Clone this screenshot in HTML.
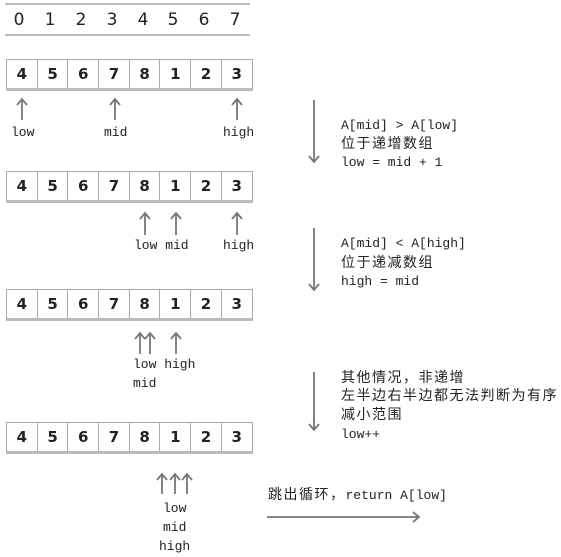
<!DOCTYPE html>
<html><head><meta charset="utf-8"><style>
body{margin:0;width:561px;height:557px;background:#fff;position:relative;overflow:hidden;font-family:"Liberation Mono","Noto Sans CJK SC",monospace;color:#222}
.t{position:absolute;white-space:nowrap;font-size:13px;line-height:13px}
.row{position:absolute;left:6px;display:flex;border:1px solid #aaa;border-bottom:3px solid #bbb}
.row div{width:29.7px;height:28px;border-right:1px solid #aaa;text-align:center;font:bold 15px/28px "DejaVu Sans","Liberation Sans",sans-serif}
.row div:last-child{border-right:none}
.idx{position:absolute;top:10px;font:17px "DejaVu Sans","Liberation Sans",sans-serif;transform:translateX(-50%)}
.cjk{font-family:"Noto Sans CJK SC",sans-serif;font-size:14px;letter-spacing:1.5px}
</style></head><body>
<div style="position:absolute;left:5px;top:3px;width:245px;height:2px;background:#bbb"></div>
<div style="position:absolute;left:5px;top:34px;width:245px;height:2px;background:#bbb"></div>
<div class="idx" style="left:19px">0</div><div class="idx" style="left:50px">1</div><div class="idx" style="left:81px">2</div><div class="idx" style="left:112px">3</div><div class="idx" style="left:143px">4</div><div class="idx" style="left:173px">5</div><div class="idx" style="left:204px">6</div><div class="idx" style="left:235px">7</div>
<div class="row" style="top:59px"><div>4</div><div>5</div><div>6</div><div>7</div><div>8</div><div>1</div><div>2</div><div>3</div></div>
<div class="row" style="top:171px"><div>4</div><div>5</div><div>6</div><div>7</div><div>8</div><div>1</div><div>2</div><div>3</div></div>
<div class="row" style="top:289px"><div>4</div><div>5</div><div>6</div><div>7</div><div>8</div><div>1</div><div>2</div><div>3</div></div>
<div class="row" style="top:422px"><div>4</div><div>5</div><div>6</div><div>7</div><div>8</div><div>1</div><div>2</div><div>3</div></div>
<svg width="561" height="557" style="position:absolute;left:0;top:0" fill="none" stroke="#777" stroke-width="1.8">
<g>
<path d="M22 120V99M17 105L22 99L27 105M115 120V99M110 105L115 99L120 105M237 120V99M232 105L237 99L242 105"/>
<path d="M145 235V213M140 219L145 213L150 219M176 235V213M171 219L176 213L181 219M237 235V213M232 219L237 213L242 219"/>
<path d="M140 354V333M135 339L140 333L145 339M150 354V333M145 339L150 333L155 339M176 354V333M171 339L176 333L181 339"/>
<path d="M162 494V474M157 480L162 474L167 480M175 494V474M170 480L175 474L180 480M187 494V474M182 480L187 474L192 480"/>
<path d="M314 100V162M309 156L314 162L319 156M314 228V290M309 284L314 290L319 284M314 372V430M309 424L314 430L319 424"/>
<path d="M267 517H419M413 512L419 517L413 522"/>
</g></svg>
<div class="t" style="left:11px;top:126px">low</div>
<div class="t" style="left:104px;top:126px">mid</div>
<div class="t" style="left:223px;top:126px">high</div>
<div class="t" style="left:134px;top:239px">low mid</div>
<div class="t" style="left:223px;top:239px">high</div>
<div class="t" style="left:133px;top:358px">low high</div>
<div class="t" style="left:133px;top:377px">mid</div>
<div class="t" style="left:163px;top:502px">low</div>
<div class="t" style="left:163px;top:521px">mid</div>
<div class="t" style="left:159px;top:540px">high</div>
<div class="t" style="left:341px;top:119px">A[mid] &gt; A[low]</div>
<div class="t cjk" style="left:341px;top:137px">位于递增数组</div>
<div class="t" style="left:341px;top:156px">low = mid + 1</div>
<div class="t" style="left:341px;top:237px">A[mid] &lt; A[high]</div>
<div class="t cjk" style="left:341px;top:256px">位于递减数组</div>
<div class="t" style="left:341px;top:275px">high = mid</div>
<div class="t cjk" style="left:341px;top:371px">其他情况，非递增</div>
<div class="t cjk" style="left:341px;top:389px">左半边右半边都无法判断为有序</div>
<div class="t cjk" style="left:341px;top:408px">减小范围</div>
<div class="t" style="left:341px;top:428px">low++</div>
<div class="t" style="left:268px;top:488px"><span class="cjk">跳出循环，</span>return A[low]</div>
</body></html>
